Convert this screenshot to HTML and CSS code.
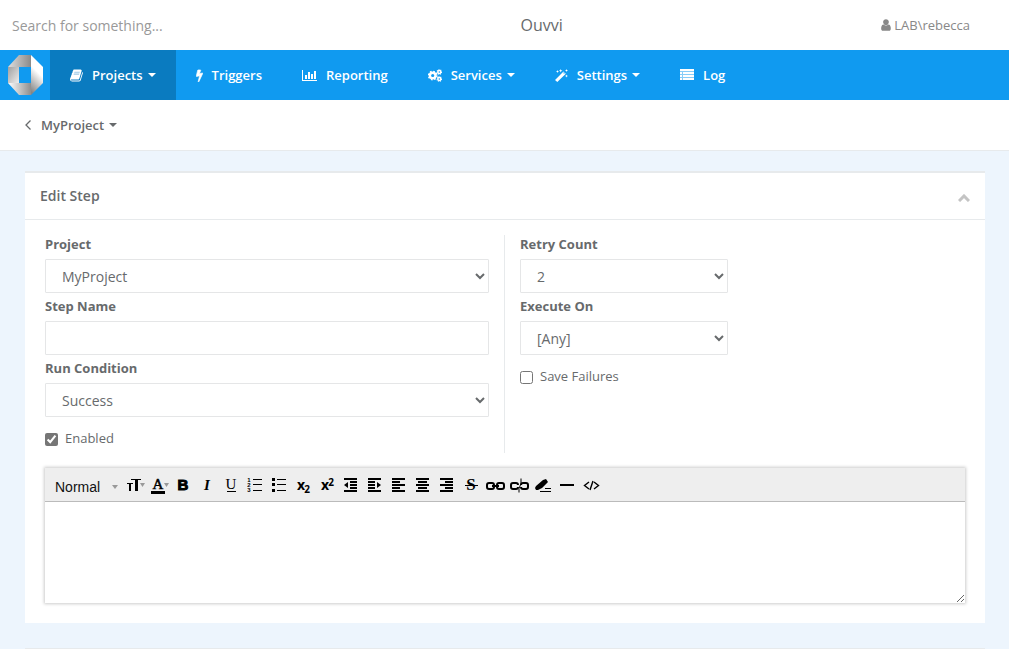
FILE: index.html
```html
<!DOCTYPE html>
<html lang="en">
<head>
<meta charset="utf-8">
<meta name="viewport" content="width=device-width, initial-scale=1">
<title>Ouvvi</title>
<link rel="stylesheet" href="styles.css">
</head>
<body>
<header class="topbar">
  <input class="search" type="search" placeholder="Search for something..." aria-label="Search">
  <span class="brand">Ouvvi</span>
  <a class="user" href="#"><svg class="user-icon" viewBox="250 100 1300 1600" width="10" height="12"><path d="M1536 1399q0 109-62.500 187t-150.500 78h-854q-88 0-150.500-78t-62.500-187q0-85 8.500-160.500t31.500-152 58.500-131 94-89 134.500-34.500q131 128 313 128t313-128q76 0 134.500 34.500t94 89 58.500 131 31.500 152 8.500 160.500zm-256-887q0 159-112.500 271.500t-271.500 112.500-271.500-112.500-112.500-271.500 112.500-271.500 271.500-112.500 271.500 112.500 112.500 271.500z"/></svg>LAB\rebecca</a>
</header>
<nav class="nav">
  <a class="logo" href="#" aria-label="Home">
    <svg viewBox="0 0 36 40" width="36" height="40">
      <defs>
        <linearGradient id="gt"><stop offset="0" stop-color="#dedede"/><stop offset="1" stop-color="#8a8a8a"/></linearGradient>
        <linearGradient id="gb"><stop offset="0" stop-color="#fff"/><stop offset="1" stop-color="#8e8e8e"/></linearGradient>
        <linearGradient id="gl" x2="1" y2="1"><stop offset="0" stop-color="#a0a0a0"/><stop offset="1" stop-color="#ededed"/></linearGradient>
        <linearGradient id="gr" x1="0.600" x2="0.300" y2="1"><stop offset="0.400" stop-color="#fff"/><stop offset="1" stop-color="#858585"/></linearGradient>
      </defs>
      <path fill="url(#gt)" d="M12 0h12v12H1z"/><path fill="url(#gl)" d="M1 12h11v16H1z"/>
      <path fill="url(#gb)" d="M1 28h23v12H12z"/><path fill="url(#gr)" d="M24 0l12 12v16L24 40z"/>
    </svg>
  </a>
  <a class="item active" href="#"><svg viewBox="60 100 1680 1600" width="13" height="13"><path d="M1703 478q40 57 18 129l-275 906q-19 64-76.500 107.500t-122.500 43.500h-923q-77 0-148.500-53.500t-99.500-131.500q-24-67-2-127 0-4 3-27t4-37q1-8-3-21.500t-3-19.500q2-11 8-21t16.500-23.500 16.500-23.500q23-38 45-91.500t30-91.500q3-10 .5-30t-.5-28q3-11 17-28t17-23q21-36 42-92t25-90q1-9-2.500-32t.5-28q4-13 22-30.500t22-22.500q19-26 42.500-84.500t27.500-96.500q1-8-3-25.500t-2-26.500q2-8 9-18t18-23 17-21q8-12 16.500-30.500t15-35 16-36 19.500-32 26.500-23.500 36-11.500 47.500 5.500l-1 3q38-9 51-9h761q74 0 114 56t18 130l-274 906q-36 119-71.500 153.500t-128.500 34.500h-869q-27 0-38 15-11 16-1 43 24 70 144 70h923q29 0 56-15.500t35-41.500l300-987q7-22 5-57 38 15 59 43z"/><path fill="#9cc8e6" d="M639 400h720l-60 150H590zM560 640h720l-60 150H510z"/></svg>Projects<i class="caret"></i></a>
  <a class="item" href="#"><svg viewBox="430 0 930 1792" width="7" height="13"><path stroke="#fff" stroke-width="90" d="M1333 566q18 20 7 44l-540 1157q-13 25-42 25-4 0-14-2-17-5-25.500-19t-4.500-30l197-808-406 101q-4 1-12 1-18 0-31-11-18-15-13-39l201-825q4-14 16-23t28-9h328q19 0 32 12.500t13 29.500q0 8-5 18l-171 463 396-98q8-2 12-2 19 0 34 15z"/></svg>Triggers</a>
  <a class="item" href="#"><svg viewBox="0 0 15 13" width="15" height="13"><path d="M0 1h1v10h14v1H0zM3 6h2v4H3zM6 3h2v7H6zM9 5h2v5H9zM12 2h2v8h-2z"/></svg>Reporting</a>
  <a class="item" href="#"><svg viewBox="0 0 14 13" width="14" height="13"><g fill="none" stroke="#fff"><circle cx="4.700" cy="6.500" r="2.800" stroke-width="2.400"/><circle cx="4.700" cy="6.500" r="4.200" stroke-width="1.400" stroke-dasharray="1.650"/><circle cx="11.300" cy="3" r="1.500" stroke-width="1.500"/><circle cx="11.300" cy="3" r="2.300" stroke-width="1.100" stroke-dasharray=".9"/><circle cx="11.300" cy="10" r="1.500" stroke-width="1.500"/><circle cx="11.300" cy="10" r="2.300" stroke-width="1.100" stroke-dasharray=".9"/></g></svg>Services<i class="caret"></i></a>
  <a class="item" href="#"><svg viewBox="0 0 13 13" width="13" height="13"><path d="M0 11L8.500 2.500 10.800 4.800 2.300 13zM8.200 3.900l.9.900 1-1-.9-.9z" fill-rule="evenodd"/><path d="M2.500 1l.4 1.100L4 2.500l-1.100.4L2.500 4l-.4-1.100L1 2.500l1.100-.4zM5.700 0l.5 1.300 1.300.5-1.300.5-.5 1.300-.5-1.300-1.300-.5 1.300-.5zM11.500 0l.4 1.100 1.100.4-1.100.4-.4 1.100-.4-1.100-1.100-.4 1.100-.4zM11.500 5.500l.4 1.100 1.100.4-1.100.4-.4 1.100-.4-1.100L10 7l1.100-.4z"/></svg>Settings<i class="caret"></i></a>
  <a class="item" href="#"><svg viewBox="0 0 14 13" width="14" height="13"><path opacity=".5" d="M0 1h14v10H0z"/><path d="M0 0h14v2H0zM0 3h2v2H0zM3 3h11v2H3zM0 6h2v2H0zM3 6h11v2H3zM0 9h2v2H0zM3 9h11v2H3z"/></svg>Log</a>
</nav>
<div class="crumbs">
  <a href="#" class="back" aria-label="Back"><svg viewBox="0 0 6 10" width="6" height="10"><path d="M5.500 .5L1 5l4.500 4.500" fill="none" stroke="#676a6c" stroke-width="1.300"/></svg></a>
  <a href="#" class="crumb">MyProject<i class="caret"></i></a>
</div>
<main class="page">
  <section class="panel">
    <div class="panel-head">
      <h1>Edit Step</h1>
      <button class="collapse" type="button" aria-label="Collapse"><svg viewBox="0 0 12 8" width="12" height="8"><path d="M1 7l5-5 5 5" fill="none" stroke="#c4c4c4" stroke-width="3"/></svg></button>
    </div>
    <form class="panel-body">
      <div class="columns">
        <div class="column ruled">
          <label class="field" for="project">Project</label>
          <select class="control" id="project"><option>MyProject</option></select>
          <label class="field" for="name">Step Name</label>
          <input class="control" id="name" type="text">
          <label class="field" for="condition">Run Condition</label>
          <select class="control" id="condition"><option>Success</option></select>
          <label class="check"><input type="checkbox" checked>Enabled</label>
        </div>
        <div class="column">
          <label class="field" for="retry">Retry Count</label>
          <select class="control" id="retry"><option>2</option></select>
          <label class="field" for="execute">Execute On</label>
          <select class="control" id="execute"><option>[Any]</option></select>
          <label class="check"><input type="checkbox">Save Failures</label>
        </div>
      </div>
      <div class="editor">
        <div class="toolbar">
          <span class="format"><select aria-label="Text format"><option>Normal</option></select></span>
          <button type="button" aria-label="Font size"><svg viewBox="0 0 24 24"><path d="M8 6h10v1h-3v11h-3V7H8zM4 10h6v1H8v7H6v-7H4z"/><path class="drop" d="M17 10h5l-2.500 4z"/></svg></button>
          <button type="button" aria-label="Font colour"><svg viewBox="0 0 24 24"><text x="11" y="16" class="serif outlined">A</text><path d="M4 18h14v3H4z"/><path class="drop" d="M17 10h5l-2.500 4z"/></svg></button>
          <button type="button" aria-label="Bold"><svg viewBox="0 0 24 24"><text x="12" y="17" class="bold">B</text></svg></button>
          <button type="button" aria-label="Italic"><svg viewBox="0 0 24 24"><text x="12" y="17" class="serif heavy italic">I</text></svg></button>
          <button type="button" aria-label="Underline"><svg viewBox="0 0 24 24"><text x="12" y="16" class="serif">U</text><path d="M8 18h9v1H8z"/></svg></button>
          <button type="button" aria-label="Numbered list"><svg viewBox="0 0 24 24"><path d="M10 6h9v1h-9zM10 11h9v1h-9zM10 17h9v1h-9z"/><text x="6" y="9" class="tiny">1</text><text x="6" y="14" class="tiny">2</text><text x="6" y="19" class="tiny">3</text></svg></button>
          <button type="button" aria-label="Bulleted list"><svg viewBox="0 0 24 24"><path d="M10 6h9v1h-9zM10 11h9v1h-9zM10 17h9v1h-9zM5 5h3v3H5zM5 10h3v3H5zM5 16h3v3H5z"/></svg></button>
          <button type="button" aria-label="Subscript"><svg viewBox="0 0 24 24"><text x="10" y="17" class="script">x</text><text x="16" y="20" class="index">2</text></svg></button>
          <button type="button" aria-label="Superscript"><svg viewBox="0 0 24 24"><text x="10" y="17" class="script">x</text><text x="16" y="13" class="index">2</text></svg></button>
          <button type="button" aria-label="Outdent"><svg viewBox="0 0 24 24"><path d="M5 5h13v2H5zM11 8h7v2h-7zM11 11h7v2h-7zM11 14h7v2h-7zM5 17h13v2H5zM9 9v6l-4-3z"/></svg></button>
          <button type="button" aria-label="Indent"><svg viewBox="0 0 24 24"><path d="M5 5h13v2H5zM5 8h7v2H5zM5 11h7v2H5zM5 14h7v2H5zM5 17h13v2H5zM14 9v6l4-3z"/></svg></button>
          <button type="button" aria-label="Align left"><svg viewBox="0 0 24 24"><path d="M5 5h13v2H5zM5 8h8v2H5zM5 11h13v2H5zM5 14h8v2H5zM5 17h13v2H5z"/></svg></button>
          <button type="button" aria-label="Align centre"><svg viewBox="0 0 24 24"><path d="M5 5h13v2H5zM7 8h9v2H7zM5 11h13v2H5zM7 14h9v2H7zM5 17h13v2H5z"/></svg></button>
          <button type="button" aria-label="Align right"><svg viewBox="0 0 24 24"><path d="M5 5h13v2H5zM10 8h8v2h-8zM5 11h13v2H5zM10 14h8v2h-8zM5 17h13v2H5z"/></svg></button>
          <button type="button" aria-label="Strikethrough"><svg viewBox="0 0 24 24"><text x="12" y="17" class="serif heavy large">S</text><path d="M6 12h13v1H6z"/></svg></button>
          <button type="button" aria-label="Link"><svg viewBox="0 0 24 24"><path class="line" d="M11 12q0-2-2-2H6q-2 0-2 2v2q0 2 2 2h3q2 0 2-2M14 12q0-2 2-2h3q2 0 2 2v2q0 2-2 2h-3q-2 0-2-2M9 13h7"/></svg></button>
          <button type="button" aria-label="Remove link"><svg viewBox="0 0 24 24"><path class="line" d="M11 12q0-2-2-2H6q-2 0-2 2v2q0 2 2 2h3q2 0 2-2M14 12q0-2 2-2h3q2 0 2 2v2q0 2-2 2h-3q-2 0-2-2"/><path d="M14 5.500v5l-2 5v4" fill="none" stroke="#000"/></svg></button>
          <button type="button" aria-label="Clear format"><svg viewBox="0 0 24 24"><path d="M5 13l7-6 3-1 2 3-6 6-4 2H5l-1-2zM14 15h6v1h-6zM9 18h11v1H9z"/></svg></button>
          <button type="button" aria-label="Horizontal rule"><svg viewBox="0 0 24 24"><path d="M5 11h14v2H5z"/></svg></button>
          <button type="button" aria-label="Code view"><svg viewBox="0 0 24 24"><path d="M10 9l-4.500 3.500L10 16M15 9l4.500 3.500L15 16M14 8l-3 9" fill="none" stroke="#000" stroke-width="1.400"/></svg></button>
        </div>
        <textarea class="text" aria-label="Description"></textarea>
      </div>
    </form>
  </section>
  <section class="panel-next"></section>
</main>
</body>
</html>
```
FILE: styles.css
```css
*{box-sizing:border-box}
body{margin:0;min-height:100vh;background:#edf5fd;color:#676a6c;font:13px/19px "Open Sans",sans-serif}
a{color:inherit;text-decoration:none}
button{border:0;background:none;padding:0;font:inherit}
svg{display:block;flex:none}
.topbar{display:flex;align-items:center;justify-content:space-between;height:50px;padding-right:39px;background:#fff}
.search{width:202px;height:50px;padding:0 0 0 12px;border:0;outline:0;background:none;font:14px "Open Sans",sans-serif;appearance:none}
.search::placeholder{color:#999}
.brand{font-size:16px;line-height:24px}
.user{display:flex;align-items:center;gap:3px;color:#888}
.user-icon{fill:#888}
.nav{display:flex;height:50px;background:#109af0;color:#fff;font-weight:600}
.logo{display:flex;align-items:center;width:50px;padding-left:7px}
.item{display:flex;align-items:center;padding:0 20px}
.item svg{margin-right:9px;fill:#fff}
.active{background:#0a7bc0}
.caret{margin-left:5px;border:4px solid transparent;border-top-color:currentColor;border-bottom:0}
.crumbs{display:flex;align-items:center;gap:10px;height:51px;padding:0 25px;border-bottom:1px solid #e7eaec;background:#fff;font-weight:600}
.crumb{display:flex;align-items:center}
.page{display:flex;flex-direction:column;gap:25px;padding:20px 24px 0 25px}
.panel{border-top:2px solid #e7eaec;background:#fff}
.panel-next{border-top:1px solid #e7eaec}
.panel-head{display:flex;align-items:center;justify-content:space-between;height:47px;padding:0 15px 2px;border-bottom:1px solid #e7eaec}
.panel-head h1{margin:0;font-size:14px;font-weight:600}
.collapse{padding-top:5px}
.panel-body{padding:15px 5px 20px}
.columns{display:grid;grid-template-columns:2fr 1fr 1fr}
.column{display:flex;flex-direction:column;padding:0 15px}
.ruled{border-right:1px solid #e7eaec}
.field{height:24px;font-weight:700}
.control{width:100%;height:34px;margin-bottom:4px;padding:0 12px;border:1px solid #e5e6e7;border-radius:1px;background:#fff;color:inherit;font:14px "Open Sans",sans-serif}
.check{display:flex;align-items:center;gap:7px;padding:8px 0 5px}
.check input{width:13px;height:13px;margin:2px 0 0;accent-color:#767676}
.editor{margin:15px 15px 0;box-shadow:0 0 3px 1px #ccc}
.toolbar{display:flex;flex-wrap:wrap;padding:5px 5px 4px 10px;border-bottom:1px solid #bbb;background:#eee}
.toolbar button,.toolbar svg{width:24px;height:24px}
.format{display:flex;align-items:center;width:68px;padding:4px 5px 0 0}
.format select{flex:1;min-width:0;padding:0;border:0;background:none;appearance:none;color:#111;font:500 14px "Liberation Sans",sans-serif}
.format::after{content:"";border:3px solid transparent;border-top:4px solid #999;border-bottom:0}
.drop{fill:#999}
.line{fill:none;stroke:#000;stroke-width:2}
.toolbar text{text-anchor:middle}
.serif{font:15px "Liberation Serif",serif}
.outlined{stroke:#000;stroke-width:0.5px}
.heavy{font-weight:700}
.large{font-size:17px}
.italic{font-style:italic}
.bold{font:700 15px "Liberation Sans",sans-serif;stroke:#000}
.tiny{font:700 6px "Liberation Sans",sans-serif}
.script{font:700 14px "Open Sans",sans-serif}
.index{font:700 10px "Open Sans",sans-serif}
.text{display:block;width:100%;height:101px;padding:10px;border:0;outline:0;resize:vertical;font:14px "Open Sans",sans-serif}
```
